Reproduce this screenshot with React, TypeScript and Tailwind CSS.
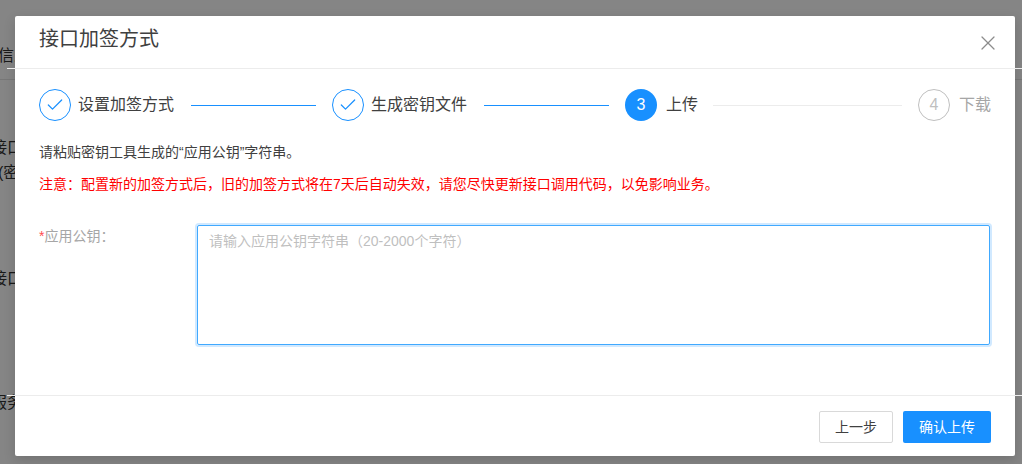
import { X, Check } from 'lucide-react'

const font = { fontFamily: '"Liberation Sans", "Noto Sans CJK SC", sans-serif' }

const notice =
  '注意\uFF1A配置新的加签方式后\uFF0C旧的加签方式将在7天后自动失效\uFF0C请您尽快更新接口调用代码\uFF0C以免影响业务。'
const hint = '请输入应用公钥字符串\uFF0820-2000个字符\uFF09'

function DoneStep({ title }: { title: string }) {
  return (
    <div className="flex items-center">
      <div className="w-8 h-8 rounded-full border border-[#1890ff] flex items-center justify-center text-[#1890ff]">
        <Check className="w-5 h-5" strokeWidth={1.5} />
      </div>
      <span className="ml-[7px] text-base leading-8 text-[#404040]">{title}</span>
      <div className="w-[125px] h-px bg-[#1890ff] ml-[17px] mr-4" />
    </div>
  )
}

export default function App() {
  return (
    <div className="relative w-[1022px] h-[464px] overflow-hidden bg-white" style={font}>
      {/* page behind the dialog */}
      <div className="h-full flex flex-col text-base leading-6 text-[#333] -ml-[2px]">
        <div className="-mt-[19px] ml-[7px]">信息</div>
        <div className="mt-[39px]">信息</div>
        <div className="mt-[11px] border-t border-[#e4e4e4] pt-[56px] -ml-[7px]">接口</div>
        <div className="mt-[1px]">(密钥</div>
        <div className="mt-[82px] -ml-[7px]">接口</div>
        <div className="mt-[100px] -ml-[7px]">服务</div>
      </div>

      <div className="absolute inset-0 bg-black/[0.48]" />

      <div className="absolute left-[15px] top-4 w-[1000px] h-[440px] bg-white rounded-[2px] shadow-[0_4px_12px_rgba(0,0,0,0.15)] flex flex-col">
        <div className="relative h-[53px] shrink-0 pl-6 pr-[15px] flex items-start justify-between">
          <span className="mt-[9px] text-xl leading-7 text-[#404040]">接口加签方式</span>
          <X className="mt-[15px] w-6 h-6 text-[#8c8c8c]" strokeWidth={1.25} />
          <div className="absolute left-[-8px] right-[-7px] bottom-0 h-px bg-[#ececec]" />
        </div>

        <div className="flex-1 px-6 pt-5 flex flex-col">
          <div className="flex items-center">
            <DoneStep title="设置加签方式" />
            <DoneStep title="生成密钥文件" />
            <div className="w-8 h-8 rounded-full bg-[#1890ff] text-white flex items-center justify-center text-base">3</div>
            <span className="ml-[9px] text-base leading-8 text-[#404040]">上传</span>
            <div className="flex-1 h-px bg-[#ececec] ml-[15px] mr-4" />
            <div className="w-8 h-8 rounded-full border border-[#bfbfbf] text-[#bfbfbf] flex items-center justify-center text-base">4</div>
            <span className="ml-[9px] text-base leading-8 text-[#a6a6a6]">下载</span>
          </div>

          <p className="mt-[21px] text-sm leading-5 text-[#404040]">请粘贴密钥工具生成的“应用公钥”字符串。</p>
          <p className="mt-3 text-sm leading-5 text-[#ff0000]">{notice}</p>

          <div className="mt-[31px] flex">
            <label className="w-[158px] shrink-0 pt-[1px] text-sm leading-5 text-[#a6a6a6]">
              <span className="text-[#ff4d4f]">*</span>应用公钥{'\uFF1A'}
            </label>
            <textarea
              readOnly
              placeholder={hint}
              className="w-[793px] h-[120px] resize-none rounded-[2px] border border-[#40a9ff] px-[11px] py-[5px] text-sm leading-5 outline-none shadow-[0_0_0_2px_rgba(24,144,255,0.2)] placeholder:text-[#bfbfbf]"
            />
          </div>
        </div>

        <div className="relative h-[61px] shrink-0 px-6 pt-[16px] flex justify-end gap-[10px]">
          <div className="absolute left-[-8px] right-[-7px] top-0 h-px bg-[#ececec]" />
          <button className="w-[74px] h-8 rounded-[2px] border border-[#d9d9d9] bg-white text-sm text-[#404040]">上一步</button>
          <button className="w-[88px] h-8 rounded-[2px] bg-[#1890ff] text-sm text-white">确认上传</button>
        </div>
      </div>
    </div>
  )
}
